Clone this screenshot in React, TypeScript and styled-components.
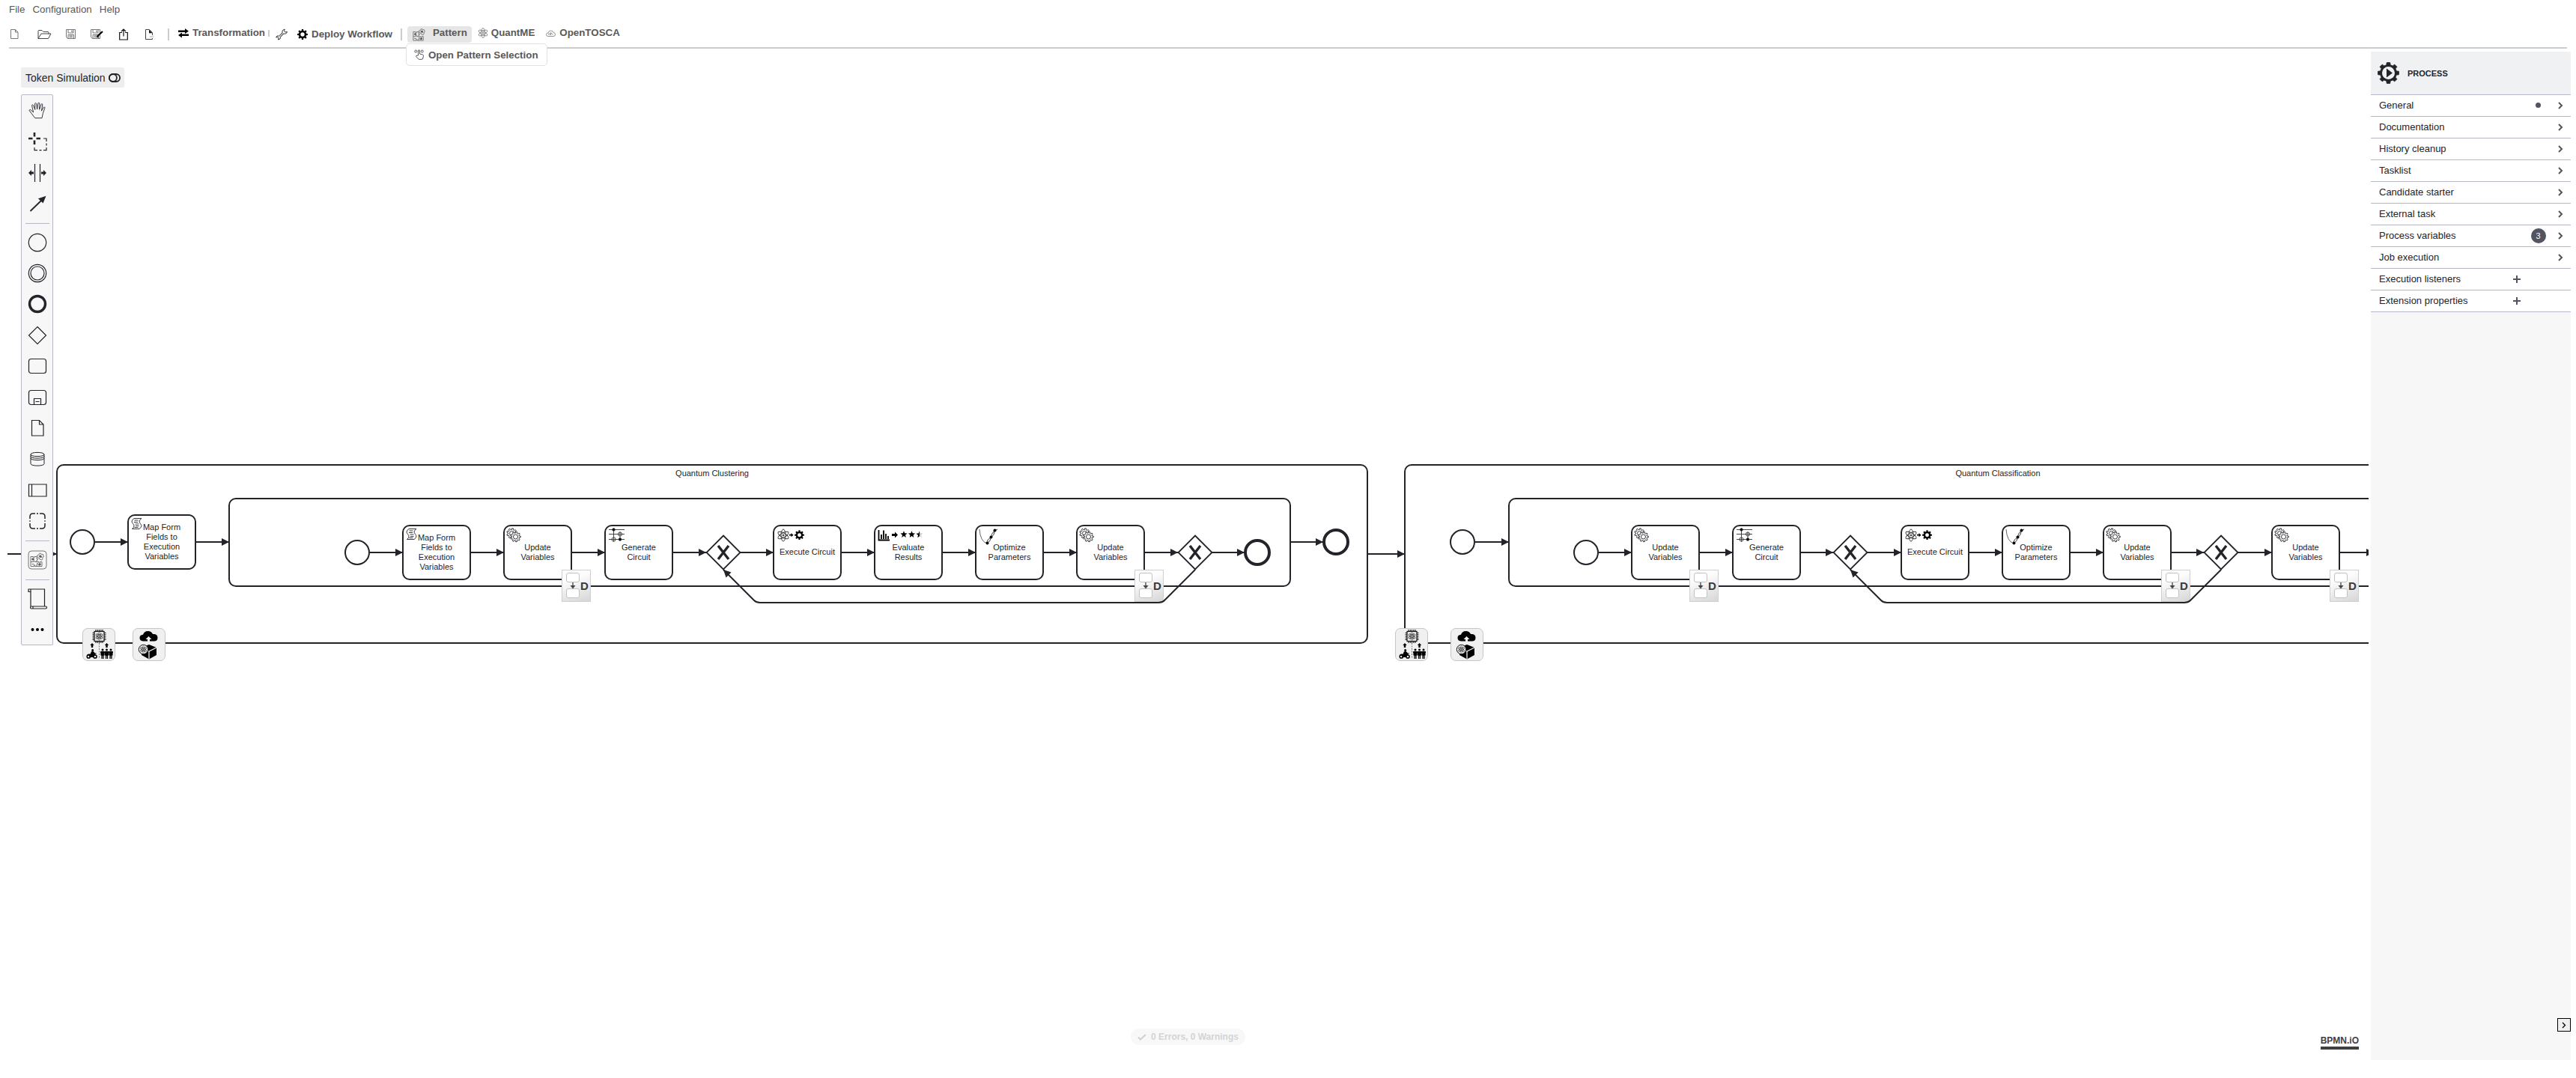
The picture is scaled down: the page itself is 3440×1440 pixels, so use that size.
import React from "react";
import styled, { createGlobalStyle } from "styled-components";

const INK = "#22242a";
const GREY = "#595959";
const LINE = "#cccccc";
const PANEL_LINE = "#b9b8c8";

const GlobalStyle = createGlobalStyle`
  *, *::before, *::after { box-sizing: border-box; }
  body { margin: 0; background: #fff; font-family: "Liberation Sans", Arial, sans-serif; }
  button { font-family: inherit; border: 0; background: none; padding: 0; margin: 0; color: inherit; cursor: pointer; }
  svg { display: block; flex: none; overflow: visible; }
`;

/* ---------- page frame ---------- */

const Page = styled.div`
  display: flex;
  flex-direction: column;
  height: 100vh;
  overflow: hidden;
  padding-bottom: 24px;
`;

const MenuBar = styled.nav`
  display: flex;
  gap: 10px;
  padding: 5px 12px 0;
  height: 34px;
  color: ${GREY};
`;

const MenuItem = styled.button`
  height: 16px;
  line-height: 16px;
`;

const Toolbar = styled.div`
  display: flex;
  align-items: flex-start;
  height: 31px;
  margin: 0 12px;
  border-bottom: 2px solid ${LINE};
`;

const IconButton = styled.button<{ $width: number; $start?: boolean }>`
  display: flex;
  align-items: center;
  justify-content: ${(p) => (p.$start ? "flex-start" : "center")};
  width: ${(p) => p.$width}px;
  height: 23px;
`;

const Separator = styled.span<{ $short?: boolean }>`
  width: 2px;
  height: ${(p) => (p.$short ? 9 : 16)}px;
  margin: ${(p) => (p.$short ? "6px 8px 0 0" : "4px 7px 0")};
  background: ${LINE};
`;

const ToolButton = styled.button<{ $active?: boolean; $low?: boolean; $gap?: number }>`
  display: flex;
  align-items: center;
  gap: ${(p) => p.$gap ?? 5}px;
  height: 22px;
  margin-top: 1px;
  padding: ${(p) => (p.$active ? "0 6px 0 7px" : "0 4px 0 5px")};
  border-radius: 4px;
  background: ${(p) => (p.$active ? "#e6e6e6" : "transparent")};
  color: ${GREY};
  font-weight: bold;
  white-space: nowrap;

  span {
    line-height: 16px;
    padding-bottom: ${(p) => (p.$low ? 0 : 4)}px;
  }
`;

const DropAnchor = styled.div`
  position: relative;
  margin-right: 4px;
`;

const DropMenu = styled.div`
  position: absolute;
  z-index: 5;
  top: 24px;
  left: -2px;
  display: flex;
  padding: 0 11px 0 10px;
  height: 30px;
  border: 1px solid #e2e2e2;
  border-radius: 5px;
  background: #fff;
`;

const DropItem = styled.button`
  display: flex;
  align-items: center;
  gap: 6px;
  color: ${GREY};
  font-weight: bold;
  white-space: nowrap;
`;

const PluginButtons = styled.div`
  display: flex;
  gap: 6px;
`;

const Workspace = styled.div`
  display: flex;
  flex: 1;
  min-height: 0;
  gap: 3px;
  padding-right: 7px;
`;

const Canvas = styled.main`
  position: relative;
  flex: 1;
  min-width: 0;
  overflow: hidden;
`;

/* ---------- canvas overlays ---------- */

const TokenToggle = styled.button`
  position: absolute;
  top: 25px;
  left: 28px;
  display: flex;
  align-items: center;
  gap: 4px;
  height: 27px;
  padding: 0 5px 0 6px;
  border-radius: 2px;
  background: #eee;
  color: ${INK};
  font-size: 14px;
`;

const Palette = styled.div`
  position: absolute;
  z-index: 2;
  top: 61px;
  left: 28px;
  width: 43px;
  border: 1px solid ${PANEL_LINE};
  border-radius: 2px;
  background: #f7f7f7;
  color: ${INK};
`;

const PaletteGroup = styled.div<{ $height: number }>`
  display: grid;
  grid-auto-rows: 1fr;
  height: ${(p) => p.$height}px;
`;

const PaletteRule = styled.hr`
  width: 32px;
  height: 1px;
  margin: 5px auto 4px;
  border: 0;
  background: ${PANEL_LINE};
`;

const PaletteEntry = styled.button`
  display: flex;
  align-items: center;
  justify-content: center;
`;

const StatusPill = styled.button`
  position: absolute;
  right: 0;
  bottom: 20px;
  left: 10px;
  display: flex;
  align-items: center;
  gap: 6px;
  width: max-content;
  height: 22px;
  margin: 0 auto;
  padding: 0 9px;
  border-radius: 11px;
  background: #f8f8f8;
  color: #d4d4d4;
  font-size: 12px;
  font-weight: bold;
  white-space: nowrap;
`;

const Brand = styled.a`
  position: absolute;
  right: 13px;
  bottom: 14px;
  border-bottom: 4px solid #404040;
  color: #404040;
  font-family: "Liberation Sans Narrow", "Liberation Sans", Arial, sans-serif;
  font-size: 12px;
  font-weight: bold;
  line-height: 16px;
  text-decoration: none;
`;

/* ---------- diagram ---------- */

const Viewport = styled.div`
  position: absolute;
  top: 535px;
  left: 0;
  color: ${INK};
  font-size: 11px;
  line-height: 13px;
`;

const Flows = styled.svg`
  position: absolute;
  top: 0;
  left: 0;
`;

type Place = { $x: number; $y: number };

const Node = styled.div<Place>`
  position: absolute;
  left: ${(p) => p.$x}px;
  top: ${(p) => p.$y}px;
`;

const Container = styled(Node)<{ $w: number; $h: number }>`
  width: ${(p) => p.$w}px;
  height: ${(p) => p.$h}px;
  padding-top: 4px;
  border: 2px solid ${INK};
  border-radius: 10px;
  text-align: center;
`;

const TaskBox = styled(Node)`
  display: flex;
  align-items: center;
  width: 92px;
  height: 74px;
  padding: 0 6px 1px;
  border: 2px solid ${INK};
  border-radius: 10px;
  background: #fff;
  text-align: center;
`;

const TaskLabel = styled.span`
  flex: 1;
`;

const TaskIcon = styled.span`
  position: absolute;
  left: 2px;
  top: 2px;
`;

const EventCircle = styled(Node)<{ $end?: boolean }>`
  width: ${(p) => (p.$end ? 36 : 34)}px;
  height: ${(p) => (p.$end ? 36 : 34)}px;
  border: ${(p) => (p.$end ? 4 : 2)}px solid ${INK};
  border-radius: 50%;
  background: #fff;
`;

const DataBadge = styled(Node)`
  display: flex;
  align-items: center;
  gap: 1px;
  width: 39px;
  height: 43px;
  padding-left: 5px;
  border: 1px solid #cfcfcf;
  background: linear-gradient(160deg, #fcfcfc 30%, #d6d6d6);
  color: #3a3a3a;
  font-size: 15px;
  font-weight: bold;
`;

const HybridBadge = styled(Node)`
  display: flex;
  align-items: center;
  justify-content: center;
  width: 44px;
  height: 44px;
  border: 1px solid #c6c6c6;
  border-radius: 7px;
  background: #f0f0f0;
`;

/* ---------- properties panel ---------- */

const Panel = styled.aside`
  flex: none;
  display: flex;
  flex-direction: column;
  width: 267px;
  margin-top: 4px;
  background: #f7f7f8;
  color: ${INK};
`;

const PanelHeader = styled.header`
  display: flex;
  align-items: center;
  gap: 11px;
  height: 58px;
  padding-left: 9px;
  border-bottom: 1px solid ${PANEL_LINE};
  background: #f0f1f3;
  font-size: 11px;
  font-weight: bold;
`;

const PanelRow = styled.button`
  display: grid;
  grid-template-columns: 1fr 29px 29px 29px;
  align-items: center;
  justify-items: center;
  height: 29px;
  padding: 0 0 1px 11px;
  border-bottom: 1px solid ${PANEL_LINE};
  background: #fff;
  color: ${INK};
  font-size: 13px;

  > :first-child { justify-self: start; }
`;

const Slot = styled.span``;

const Dot = styled.span`
  display: block;
  width: 7px;
  height: 7px;
  border-radius: 50%;
  background: #52555f;
`;

const Count = styled.span`
  display: block;
  width: 20px;
  height: 20px;
  border-radius: 10px;
  background: #52555f;
  color: #fff;
  font-size: 11px;
  line-height: 20px;
  text-align: center;
`;

const Collapse = styled.button`
  display: flex;
  align-items: center;
  justify-content: center;
  align-self: flex-end;
  width: 18px;
  height: 18px;
  margin: auto 0 38px;
  border: 1px solid #000;
  background: #f0f0f0;
`;

/* ---------- drawings ---------- */

function gearPath(cx: number, cy: number, inner: number, outer: number, teeth: number) {
  const pts: string[] = [];
  const step = (Math.PI * 2) / teeth;
  for (let i = 0; i < teeth; i++) {
    const a = i * step;
    [[-0.3, inner], [-0.2, outer], [0.2, outer], [0.3, inner]].forEach(([k, r]) => {
      pts.push(`${(cx + Math.cos(a + k * step) * r).toFixed(2)} ${(cy + Math.sin(a + k * step) * r).toFixed(2)}`);
    });
  }
  return `M${pts.join("L")}Z`;
}

const ringGear = (cx: number, cy: number, r: number) =>
  gearPath(cx, cy, r * 0.74, r, 8) +
  `M${cx - r * 0.38} ${cy}a${r * 0.38} ${r * 0.38} 0 1 0 ${r * 0.76} 0a${r * 0.38} ${r * 0.38} 0 1 0 ${-r * 0.76} 0Z`;

const Atom = ({ cx, cy, r, w = 0.7, color = "#333" }: { cx: number; cy: number; r: number; w?: number; color?: string }) => (
  <g fill="none" stroke={color} strokeWidth={w}>
    {[30, 90, 150].map((a) => (
      <ellipse key={a} cx={cx} cy={cy} rx={r} ry={r * 0.38} transform={`rotate(${a} ${cx} ${cy})`} />
    ))}
    <circle cx={cx} cy={cy} r={r * 0.12} fill={color} />
  </g>
);

const NewIcon = () => (
  <svg width="12" height="15" fill="none" stroke="#777">
    <path d="M2.5 1.5h6l3.500 3.500v8.500H2.500zM8.500 1.500V5H12" />
  </svg>
);
const OpenIcon = () => (
  <svg width="19" height="14" fill="none" stroke="#444" strokeLinejoin="round">
    <path d="M1 12.5V2.5q0-1 1-1h4l2 2h6q1 0 1 1v2M1 12.5l4-6.5h13l-3.500 6.500z" />
  </svg>
);
const Floppy = () => (
  <>
    <path d="M.5.5h12v12H2.500l-2-2zM3 .5v4.500h7V.5M3 12.500V7.500h7.500v5M4.500 9h4.500M4.500 10.700h4.500" stroke="#777" />
    <path d="M8 1.500v2.500" stroke="#555" />
  </>
);
const SaveIcon = () => (
  <svg width="13" height="13" fill="none"><Floppy /></svg>
);
const SaveAsIcon = () => (
  <svg width="17" height="13" fill="none">
    <Floppy />
    <path d="M9 11l1-2.500 6-5.500" stroke="#000" strokeWidth="2.200" />
  </svg>
);
const ExportIcon = () => (
  <svg width="12" height="16" fill="none" stroke="#111" strokeWidth="1.200">
    <path d="M4 5.500H.7v9.500h10.600V5.500H8M6 10.500V1M3 4l3-3 3 3" />
  </svg>
);
const DocExportIcon = () => (
  <svg width="13" height="14" fill="none" stroke="#444">
    <path d="M10.500 8V4.500L6.500.5h-5v13h9v-1.500" />
    <path d="M6 .8v4.500h4.500z" fill="#111" stroke="none" />
    <path d="M7 10h4" stroke="#aaa" />
    <path d="M10.500 7.500l2.500 2.500-2.500 2.500z" fill="#ddd" stroke="none" />
  </svg>
);
const SwapIcon = () => (
  <svg width="14" height="20" fill="#000">
    <path d="M0 4.500h9V2l5 3.700L9 9V7H0zM14 9.500v2.500H5v2.500L0 11l5-3.500v2z" />
  </svg>
);
const WrenchIcon = () => (
  <svg width="16" height="16" fill="none" stroke="#333" strokeLinejoin="round">
    <path d="M11 1.500q-3 1-2 4.500L4.500 10Q1.500 9 .7 12l2-.500 1.300 1.500-.500 2Q7 14.500 6.500 11.500L11 7q3.500.800 4.500-2.500L13 5l-1.500-1.500.8-2.300z" />
    <path d="M5 11.500L10.500 6" strokeWidth=".6" />
  </svg>
);
const SolidGear = ({ size }: { size: number }) => (
  <svg width={size} height={size} fill="#000" fillRule="evenodd">
    <path d={ringGear(size / 2, size / 2, size / 2)} />
  </svg>
);
const PuzzleShapes = () => (
  <g fill="none" stroke="#555" strokeWidth=".8">
    <path d="M1 5h3.500q-.8 1.500.700 1.500T6 5h3v3q1.500-.700 1.500.8T9 9.500V12H6.200q.7-1.500-.8-1.500T4.500 12H1z" />
    <path d="M1 12v6h4.500q-1-1.800.5-1.800t.5 1.800H16v-6h-2.500q.8 1.600-.8 1.600T12 12H9M9 14q1.500-.7 1.500.8T9 15.500V18" />
    <path d="M9.500 3.500l3-1.500q-.3-1.500 1-1.500t1.300 1.200L17.500 2l.8 3q-1.700.3-1.300 1.600t-1 3L13 8.500l-.5-1.500-2-.5z" />
    <g fill="#555"><circle cx="4" cy="8.500" r="1.200" /><circle cx="14" cy="4.700" r="1.300" /><circle cx="13" cy="15.500" r="1.200" /></g>
    <path d="M2.500 8.500h3.500M2.500 15h3M12 4l4 2M11 16.500l3.500-2" />
  </g>
);
const PatternIcon = () => (
  <svg width="16" height="17" viewBox="0 0 18 19"><PuzzleShapes /></svg>
);
const AtomIcon = () => (
  <svg width="12" height="18"><Atom cx={6} cy={7} r={6.500} color="#666" /></svg>
);
const CloudIcon = () => (
  <svg width="13" height="16" fill="none" stroke="#888" strokeWidth=".9">
    <path d="M3 10.500q-2.500 0-2.500-2.300T3 6q.5-3 3.500-3T10 5.500q2.500 0 2.500 2.500T10 10.500z" />
    <circle cx="4.500" cy="7.500" r="1" /><path d="M6.500 9V5.500l3 3" />
  </svg>
);
const TouchIcon = () => (
  <svg width="13" height="14" fill="none" stroke="#444" strokeWidth=".9">
    <circle cx="2.300" cy="2.500" r="1.500" /><circle cx="10.700" cy="2.500" r="1.500" />
    <path d="M5.500 8V2q0-1.300 1-1.300t1 1.300v4l4 1q1 .3 1 1.500l-.8 3.500q-.3 1.300-1.500 1.300H6.500L2.500 9.500q0-1.500 1.500-1.200z" />
  </svg>
);
const ToggleIcon = () => (
  <svg width="16" height="12" fill="none" stroke={INK} strokeWidth="1.800">
    <rect x=".9" y="1" width="14.200" height="10" rx="5" />
    <circle cx="5.900" cy="6" r="5" />
  </svg>
);

const P = ({ children }: { children: React.ReactNode }) => (
  <svg width="26" height="26" fill="none" stroke={INK} strokeWidth="1.200">{children}</svg>
);

const paletteTools: [string, React.ReactNode][] = [
  ["Hand tool", <P><path strokeWidth=".9" d="M9.700 22.700L5.500 17 2.300 13C1.800 11.800 3 11 4 11.800L7.600 15 5.600 6.200C5.400 4.800 7 4.400 7.500 5.700L9.800 11.500 9.600 3.600C9.600 2.200 11.400 2.200 11.600 3.600L12.600 11 13.900 3C14.100 1.800 15.800 2 15.800 3.300L15.600 11.300 18 4.400C18.500 3.200 20 3.600 19.800 5L18.400 13.200 21.200 8.400C21.900 7.500 23.200 8 22.900 9.200L20.400 16.300 19 22.700Z" /></P>],
  ["Lasso tool", <P>
    <path d="M9 1v5.500M9 11.500v5.500M1 9h5.500M11.500 9h5.500" strokeWidth="2.600" />
    <path d="M21 9h4v4M25 15.500v3M25 21v3.700h-4M18.500 24.700h-3M13 24.700H9V21" />
  </P>],
  ["Space tool", <P>
    <path d="M9.500 1v24M16.500 1v24" />
    <path fill={INK} stroke="none" d="M1 13l4-4v2.500h3v3H5V17zM25 13l-4-4v2.500h-3v3h3V17z" />
  </P>],
  ["Connect tool", <P>
    <path d="M3.500 23L18 9" strokeWidth="1.800" />
    <path d="M24.500 2.800L20.500 12.500 14 6.300Z" fill={INK} stroke="none" />
  </P>],
];

const paletteShapes: [string, React.ReactNode][] = [
  ["Start event", <P><circle cx="13" cy="13" r="11.700" /></P>],
  ["Intermediate event", <P><circle cx="13" cy="13" r="11.700" /><circle cx="13" cy="13" r="9" /></P>],
  ["End event", <P><circle cx="13" cy="13" r="10.500" strokeWidth="3.400" /></P>],
  ["Gateway", <P><path d="M13 1.500L24.500 13 13 24.500 1.500 13Z" /></P>],
  ["Task", <P><rect x="1.500" y="3.500" width="23" height="19" rx="3" /></P>],
  ["Subprocess", <P><rect x="1.500" y="3.500" width="23" height="19" rx="3" /><path d="M8.500 22.500v-8h9v8M10.500 18.500h5" /></P>],
  ["Data object", <P><path d="M5.500 2.500h10l5.500 5.500v15H5.500zM15.500 2.500V8H21" /></P>],
  ["Data store", <P><path strokeWidth="1" d="M4 7v12.500c0 3.500 18 3.500 18 0V7c0-3.500-18-3.500-18 0c0 3.500 18 3.500 18 0M4 9.500c0 3.500 18 3.500 18 0M4 12c0 3.500 18 3.500 18 0" /></P>],
  ["Pool", <P><path d="M1.500 5h23.500v16H1.500zM5.500 5v16" /></P>],
  ["Group", <P><path strokeWidth="1.500" d="M3 10V7q0-4 4-4h3M16 3h3q4 0 4 4v3M23 16v3q0 4-4 4h-3M10 23H7q-4 0-4-4v-3M12 3h2M12 23h2M3 12.300v1.500M23 12.300v1.500" /></P>],
];

const HeaderGear = () => (
  <svg width="29" height="29" viewBox="0 0 29 29">
    <path d={gearPath(14.500, 14.500, 11, 14, 8)} fill={INK} stroke={INK} strokeWidth="1" strokeLinejoin="round" />
    <circle cx="14.500" cy="14.500" r="8.500" fill="#f0f1f3" />
    <path d="M12 8.500l8 6-8 6z" fill={INK} />
  </svg>
);
const Chevron = () => (
  <svg width="6" height="10" fill="none" stroke="#52555f" strokeWidth="2"><path d="M1 1l4 4-4 4" /></svg>
);
const Plus = () => (
  <svg width="10" height="10" fill="none" stroke="#52555f" strokeWidth="2"><path d="M5 0v10M0 5h10" /></svg>
);

const star = (x: number) => {
  const pts: string[] = [];
  for (let i = 0; i < 10; i++) {
    const r = i % 2 ? 2.100 : 4.800;
    const a = (Math.PI / 5) * i - Math.PI / 2;
    pts.push(`${(x + Math.cos(a) * r).toFixed(2)},${(7.500 + Math.sin(a) * r).toFixed(2)}`);
  }
  return pts.join(" ");
};

const taskIcons: Record<string, React.ReactNode> = {
  script: (
    <svg width="16" height="18" fill="none" stroke={INK} strokeWidth=".9">
      <path d="M5 1.500h10q-5 3.500-1.500 7t-1.500 7H2.500q4.500-3.500 1-7t1.500-7zM5.500 4h5M5 6.500h5M6.500 9h5M7 11.500h4.500M5.500 13.500h5" />
    </svg>
  ),
  gears: (
    <svg width="20" height="19" fill="#fff" stroke={INK} strokeWidth=".9">
      <path d={gearPath(7.500, 7.500, 5, 6.800, 9)} /><circle cx="7.500" cy="7.500" r="3" />
      <path d={gearPath(12.500, 12, 5, 6.800, 9)} /><circle cx="12.500" cy="12" r="3" />
    </svg>
  ),
  circuit: (
    <svg width="24" height="19" fill="none" stroke="#333" strokeWidth=".9">
      <path d="M2 2.500h21M2 8.500h21M2 15.500h21M8.500 2v16.500M17 5.500v10" />
      <circle cx="8.500" cy="2.500" r="1.800" fill="#000" /><circle cx="17" cy="15.500" r="1.800" fill="#000" />
      <circle cx="17" cy="8.500" r="2.600" /><circle cx="8.500" cy="15.500" r="2.600" />
    </svg>
  ),
  execute: (
    <svg width="40" height="18">
      <Atom cx={10} cy={10} r={8} w={0.9} />
      <path d="M18 8.800h2.500V7l3 2.700-3 2.600v-1.800H18z" />
      <path d={ringGear(31.500, 9.700, 6.500)} fillRule="evenodd" />
    </svg>
  ),
  evaluate: (
    <svg width="62" height="18">
      <path d="M2.500 2v13.500H17M6 14V8M9 14V2.500M12 14V7M15 14v-4" fill="none" stroke="#000" strokeWidth="1.800" transform="translate(0 1)" />
      <path d="M20 8h4V5.500l4 4-4 4V11h-4z" />
      <g transform="translate(0 1.500)">
        <polygon points={star(36)} /><polygon points={star(46.500)} />
        <polygon points={star(57)} fill="#ccc" />
        <path d="M57 2.700v7l-2.800 2 .9-3.300-2.600-2.200 3.200-.1z" />
      </g>
    </svg>
  ),
  optimize: (
    <svg width="26" height="23" fill="none" stroke="#555" strokeWidth=".9">
      <path d="M2 2q1 16 10 19" />
      <path d="M12 21q0-6 5.500-8Q18 5 26 2M12 21q5-3 5.500-8 4.500-3 5-9.500" stroke="#222" />
      <g fill="#000" stroke="none"><circle cx="12.500" cy="20.500" r="2" /><circle cx="17.500" cy="12.500" r="2" /><circle cx="22.500" cy="3.500" r="2" /></g>
    </svg>
  ),
};

const DataFlowGlyph = () => (
  <svg width="18" height="37" fill="#fff" stroke="#c2c2c2">
    <rect x=".5" y="1.500" width="17" height="12" rx="2.500" />
    <rect x=".5" y="22.500" width="17" height="12" rx="2.500" />
    <path d="M9 14v6" stroke="#444" strokeWidth="1.300" />
    <path d="M5.500 18h7L9 22.500z" fill="#444" stroke="none" />
  </svg>
);

const Person = ({ x }: { x: number }) => (
  <>
    <circle cx={x} cy={29} r={1.500} />
    <path d={`M${x - 2.600} 31h5.200v5.500h-1v4.500h-1.300v-4h-.6v4h-1.300v-4.500h-1z`} />
  </>
);
const HybridGlyph = () => (
  <svg width="44" height="44" fill="#000">
    <rect x="16" y="4.500" width="13" height="13" fill="none" stroke="#111" strokeWidth="1.200" />
    <path d="M18 2v2.500M20.300 2v2.500M22.500 2v2.500M24.800 2v2.500M27 2v2.500M18 17.500V20M20.300 17.500V20M22.500 17.500V20M24.800 17.500V20M27 17.500V20M13.500 6.500H16M13.500 8.800H16M13.500 11H16M13.500 13.300H16M13.500 15.500H16M29 6.500h2.500M29 8.800h2.500M29 11h2.500M29 13.300h2.500M29 15.500h2.500" stroke="#111" strokeWidth="1.100" />
    <Atom cx={22.500} cy={11} r={5} w={0.8} />
    <path d="M13 20l2.700 3h-1.500v3h-2.400v-3h-1.500zM32.500 20l2.700 3h-1.500v3h-2.400v-3h-1.500z" />
    <path d="M22.500 20v21" stroke="#777" strokeDasharray="2 1.500" />
    <g fill="none" stroke="#000" strokeWidth="1.500">
      <circle cx="8.300" cy="38" r="2.100" /><circle cx="17" cy="38" r="2.100" />
    </g>
    <circle cx="13.700" cy="29.500" r="1.500" />
    <path d="M6 35.500q2.500-1.500 4.500-.7l1.500-3.500 2.500-.3 2.500 2.500 1.500-.3v1.200l-2 .4 1.700 1.500-3 1.200-1 1.500h-4.500l-1.200-2.500z" />
    <Person x={27} /><Person x={32.500} /><Person x={38} />
    <path d="M24 31.500h17v1.500H24z" />
  </svg>
);
const DeployGlyph = () => (
  <svg width="44" height="44">
    <path d="M14 17.500q-4.500-.5-4.500-4.500t4.500-4.300q1.500-4.700 6.500-4.700 4.500 0 6.500 4 6.500-.5 6.500 5 0 4-4 4.500z" />
    <path d="M21.500 11l4 4h-2.500v8h-3v-8h-2.500z" fill="#f0f0f0" />
    <path d="M12 26l10-4 10 4v10l-10 5.500-10-5.500z" />
    <path d="M12 27l10 4 10-5M22 31v10" fill="none" stroke="#f0f0f0" strokeWidth="1.300" />
    <circle cx="14.500" cy="28.500" r="6.200" fill="#f0f0f0" stroke="#111" />
    <Atom cx={14.500} cy={28.500} r={4.500} />
  </svg>
);

/* ---------- diagram data ---------- */

type Task = { x: number; y?: number; icon: string; label: string; badge?: boolean };

const tasks: Task[] = [
  { x: 170, y: 87, icon: "script", label: "Map Form Fields to Execution Variables" },
  { x: 537, icon: "script", label: "Map Form Fields to Execution Variables" },
  { x: 672, icon: "gears", label: "Update Variables", badge: true },
  { x: 807, icon: "circuit", label: "Generate Circuit" },
  { x: 1032, icon: "execute", label: "Execute Circuit" },
  { x: 1167, icon: "evaluate", label: "Evaluate Results" },
  { x: 1302, icon: "optimize", label: "Optimize Parameters" },
  { x: 1437, icon: "gears", label: "Update Variables", badge: true },
  { x: 2178, icon: "gears", label: "Update Variables", badge: true },
  { x: 2313, icon: "circuit", label: "Generate Circuit" },
  { x: 2538, icon: "execute", label: "Execute Circuit" },
  { x: 2673, icon: "optimize", label: "Optimize Parameters" },
  { x: 2808, icon: "gears", label: "Update Variables", badge: true },
  { x: 3033, icon: "gears", label: "Update Variables", badge: true },
];

const gateways = [966, 1596, 2471, 2966];

/* straight sequence flows: from x, to x, y */
const flows: [number, number, number][] = [
  [10, 76, 140], [1826, 1876, 140],
  [127, 171, 124], [262, 306, 124], [1723, 1767, 124], [1970, 2015, 124],
  [494, 538, 138], [629, 673, 138], [764, 808, 138], [899, 943, 138], [989, 1033, 138],
  [1124, 1168, 138], [1259, 1303, 138], [1394, 1438, 138], [1529, 1573, 138], [1619, 1662, 138],
  [2135, 2179, 138], [2270, 2314, 138], [2405, 2448, 138], [2494, 2539, 138], [2630, 2674, 138],
  [2765, 2809, 138], [2900, 2943, 138], [2989, 3034, 138], [3125, 3170, 138],
];

/* loops running back from the right gateway to the left one */
const loops: [number, number][] = [[1596, 966], [2966, 2471]];

const Diagram = () => (
  <Viewport>
    <Container $x={75} $y={20} $w={1752} $h={240}>Quantum Clustering</Container>
    <Container $x={1875} $y={20} $w={1586} $h={240}>Quantum Classification</Container>
    <Container $x={305} $y={65} $w={1419} $h={119} />
    <Container $x={2014} $y={65} $w={1400} $h={119} />

    {tasks.map((t) => (
      <TaskBox key={t.x} $x={t.x} $y={t.y ?? 101}>
        <TaskIcon>{taskIcons[t.icon]}</TaskIcon>
        <TaskLabel>{t.label}</TaskLabel>
      </TaskBox>
    ))}
    {tasks.filter((t) => t.badge).map((t) => (
      <DataBadge key={t.x} $x={t.x + 78} $y={161}>
        <DataFlowGlyph />
        D
      </DataBadge>
    ))}

    <Flows width="3440" height="300" fill="none" stroke={INK} strokeWidth="2">
      <defs>
        <marker id="arrow" markerUnits="userSpaceOnUse" markerWidth="10" markerHeight="10" refX="10" refY="5" orient="auto">
          <path d="M0 0L10 5L0 10Z" fill={INK} stroke="none" />
        </marker>
      </defs>
      {flows.map(([a, b, y]) => (
        <path key={`${a}-${y}`} d={`M${a} ${y}H${b}`} markerEnd="url(#arrow)" />
      ))}
      {loops.map(([a, b]) => (
        <path
          key={a}
          d={`M${a} 161L${a - 41} 202Q${a - 44} 205 ${a - 49} 205H${b + 49}Q${b + 44} 205 ${b + 41} 202L${b} 161`}
          markerEnd="url(#arrow)"
        />
      ))}
      {gateways.map((x) => (
        <g key={x}>
          <path d={`M${x} 115.500L${x + 22.500} 138L${x} 160.500L${x - 22.500} 138Z`} fill="#fff" strokeWidth="1.800" />
          <path d={`M${x - 7} 129L${x + 7} 147M${x + 7} 129L${x - 7} 147`} strokeWidth="3.400" />
        </g>
      ))}
    </Flows>

    <EventCircle $x={93} $y={107} />
    <EventCircle $x={460} $y={121} />
    <EventCircle $x={1661} $y={120} $end />
    <EventCircle $x={1766} $y={106} $end />
    <EventCircle $x={1936} $y={107} />
    <EventCircle $x={2101} $y={121} />

    {[110, 1863].map((x) => <HybridBadge key={x} $x={x} $y={239}><HybridGlyph /></HybridBadge>)}
    {[177, 1937].map((x) => <HybridBadge key={x} $x={x} $y={239}><DeployGlyph /></HybridBadge>)}
  </Viewport>
);

const panelRows: { label: string; mark?: "dot" | "count"; add?: boolean }[] = [
  { label: "General", mark: "dot" },
  { label: "Documentation" },
  { label: "History cleanup" },
  { label: "Tasklist" },
  { label: "Candidate starter" },
  { label: "External task" },
  { label: "Process variables", mark: "count" },
  { label: "Job execution" },
  { label: "Execution listeners", add: true },
  { label: "Extension properties", add: true },
];

export default function App() {
  return (
    <Page>
      <GlobalStyle />
      <MenuBar>
        <MenuItem>File</MenuItem>
        <MenuItem>Configuration</MenuItem>
        <MenuItem>Help</MenuItem>
      </MenuBar>
      <Toolbar>
        <IconButton $width={30} $start aria-label="New diagram"><NewIcon /></IconButton>
        <IconButton $width={35} aria-label="Open diagram"><OpenIcon /></IconButton>
        <IconButton $width={35} aria-label="Save"><SaveIcon /></IconButton>
        <IconButton $width={35} aria-label="Save as"><SaveAsIcon /></IconButton>
        <IconButton $width={35} aria-label="Upload"><ExportIcon /></IconButton>
        <IconButton $width={35} aria-label="Export"><DocExportIcon /></IconButton>
        <Separator />
        <ToolButton><SwapIcon /><span>Transformation</span></ToolButton>
        <Separator $short />
        <IconButton $width={24} $start aria-label="Service configuration"><WrenchIcon /></IconButton>
        <ToolButton $low><SolidGear size={14} /><span>Deploy Workflow</span></ToolButton>
        <Separator />
        <DropAnchor>
          <ToolButton $active $gap={11}><PatternIcon /><span>Pattern</span></ToolButton>
          <DropMenu>
            <DropItem><TouchIcon />Open Pattern Selection</DropItem>
          </DropMenu>
        </DropAnchor>
        <PluginButtons>
          <ToolButton><AtomIcon /><span>QuantME</span></ToolButton>
          <ToolButton><CloudIcon /><span>OpenTOSCA</span></ToolButton>
        </PluginButtons>
      </Toolbar>

      <Workspace>
        <Canvas>
          <Diagram />
          <TokenToggle>Token Simulation<ToggleIcon /></TokenToggle>
          <Palette>
            <PaletteGroup $height={166}>
              {paletteTools.map(([name, icon]) => <PaletteEntry key={name} aria-label={name}>{icon}</PaletteEntry>)}
            </PaletteGroup>
            <PaletteRule />
            <PaletteGroup $height={414}>
              {paletteShapes.map(([name, icon]) => <PaletteEntry key={name} aria-label={name}>{icon}</PaletteEntry>)}
            </PaletteGroup>
            <PaletteRule />
            <PaletteGroup $height={42}>
              <PaletteEntry aria-label="Pattern">
                <svg width="26" height="26">
                  <rect x="1" y="1" width="24" height="24" rx="4" fill="none" stroke="#777" />
                  <g transform="translate(3 3.500)"><PuzzleShapes /></g>
                </svg>
              </PaletteEntry>
            </PaletteGroup>
            <PaletteRule />
            <PaletteGroup $height={82}>
              <PaletteEntry aria-label="Data map">
                <svg width="28" height="28" fill="none" stroke="#222" strokeWidth="1.200">
                  <path d="M5 24V4.500H2V1h21.500v23M5 1v3.500" />
                  <rect x="4.500" y="24" width="22" height="3" rx="1.500" /><path d="M8 24v3" />
                </svg>
              </PaletteEntry>
              <PaletteEntry aria-label="More elements">
                <svg width="18" height="6"><circle cx="2.500" cy="3" r="2" /><circle cx="9" cy="3" r="2" /><circle cx="15.500" cy="3" r="2" /></svg>
              </PaletteEntry>
            </PaletteGroup>
          </Palette>
          <StatusPill>
            <svg width="12" height="9" fill="none" stroke="#cfcfcf" strokeWidth="2"><path d="M1 4.500l3 3L11 1" /></svg>
            0 Errors, 0 Warnings
          </StatusPill>
          <Brand href="#bpmn">BPMN.iO</Brand>
        </Canvas>

        <Panel>
          <PanelHeader><HeaderGear />PROCESS</PanelHeader>
          {panelRows.map((row) => (
            <PanelRow key={row.label}>
              <span>{row.label}</span>
              <Slot>{row.add && <Plus />}</Slot>
              <Slot>
                {row.mark === "dot" && <Dot />}
                {row.mark === "count" && <Count>3</Count>}
              </Slot>
              <Slot>{!row.add && <Chevron />}</Slot>
            </PanelRow>
          ))}
          <Collapse aria-label="Collapse panel">
            <svg width="6" height="9" fill="none" stroke="#000" strokeWidth="1.300"><path d="M1 1l3.500 3.500L1 8" /></svg>
          </Collapse>
        </Panel>
      </Workspace>
    </Page>
  );
}
